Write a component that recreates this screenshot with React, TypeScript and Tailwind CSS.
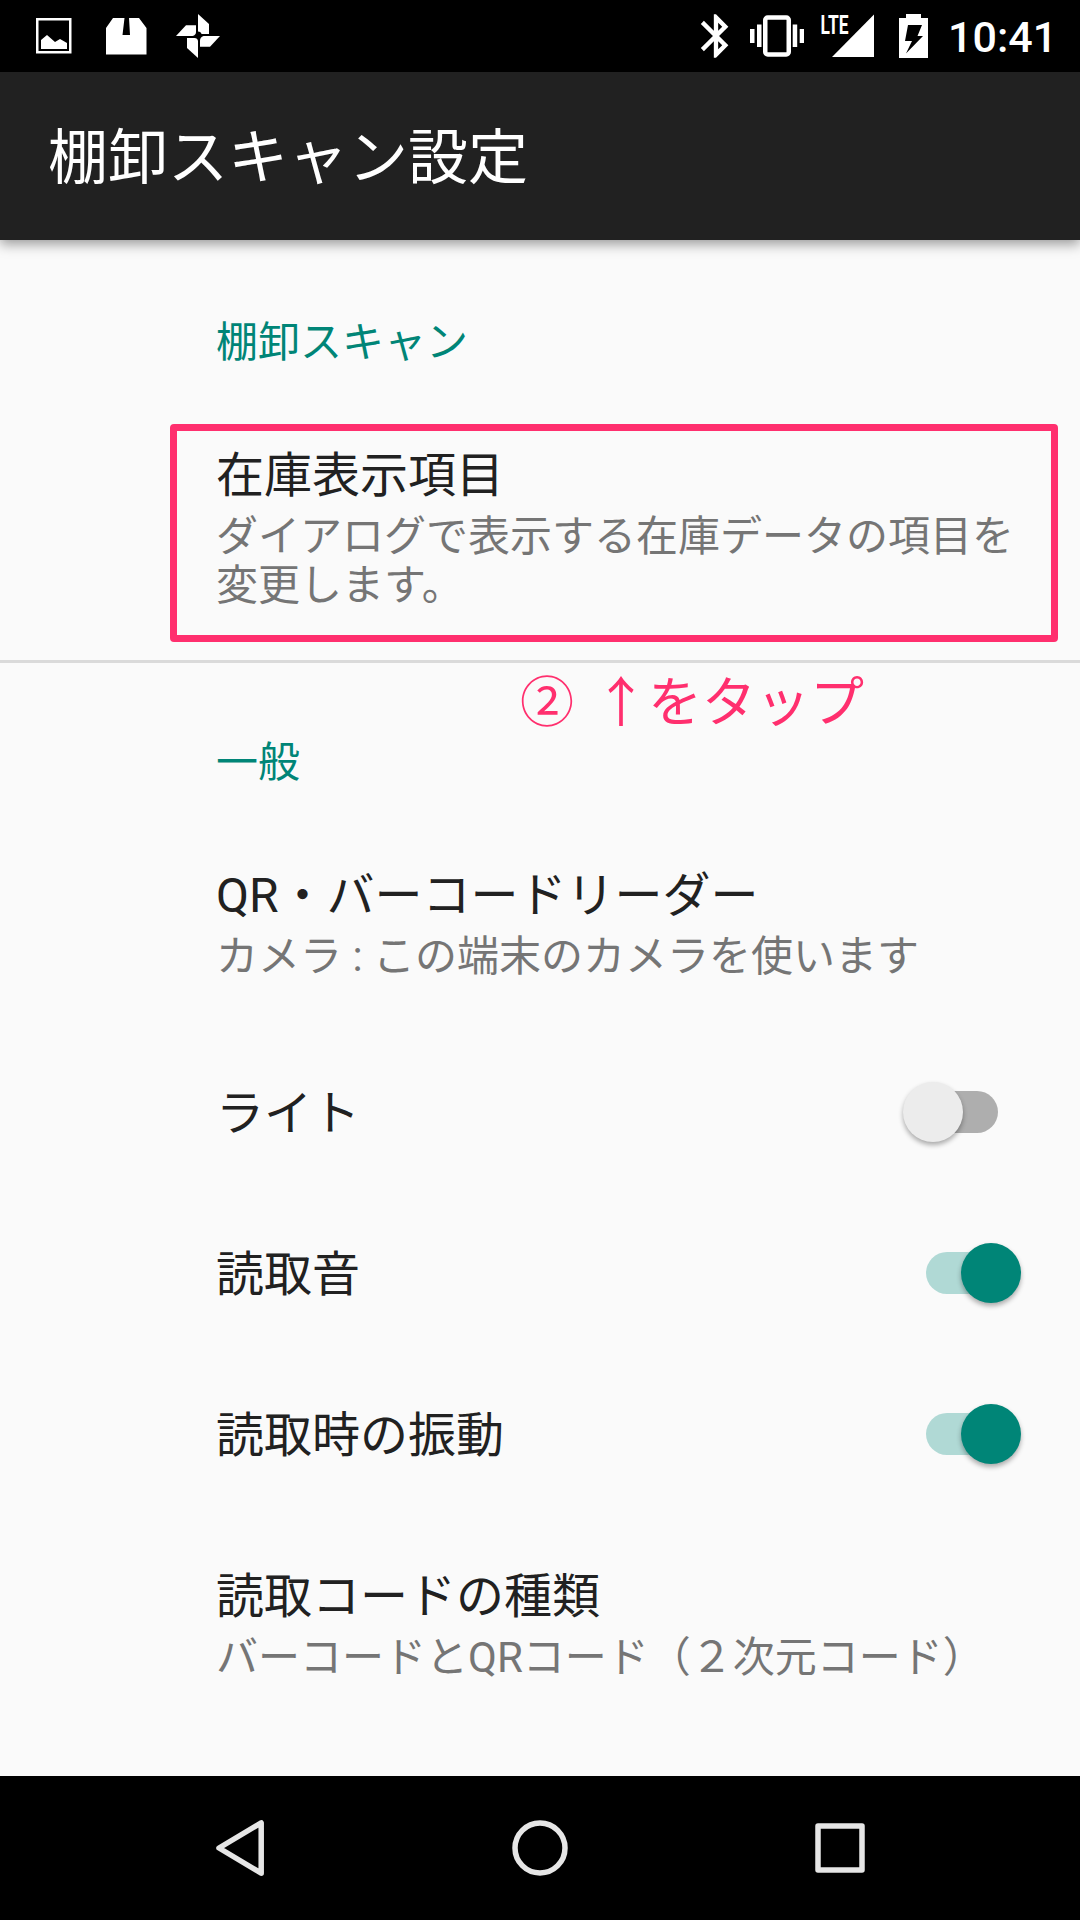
import { useState } from 'react';

type PreferenceProps = {
	title: string;
	summary?: string;
	className?: string;
};

type SwitchRowProps = {
	title: string;
	initial: boolean;
};

function StatusBar() {
	return (
		<div className="flex h-[72px] items-center justify-between bg-black text-white">
			<div className="flex pl-9">
				<svg width="36" height="72" viewBox="36 0 36 72" fill="currentColor">
					<rect x="37.25" y="19.25" width="33" height="33" fill="none" stroke="currentColor" strokeWidth="2.5" />
					<path d="M41 49V40L47 35L55 42L60 39L67 43V49Z" />
				</svg>
				<svg width="41" height="72" viewBox="106 0 41 72" className="ml-[34px]" fill="currentColor">
					<path d="M106 54.5V28L113 18H124.5L122.5 35H130L129 18H139L146.5 28V54.5Z" />
				</svg>
				<svg width="44" height="72" viewBox="176 0 44 72" className="ml-[29px]" fill="currentColor">
					<path d="M198 14L209 24V34H201.500Q201 31.500 198 31.500Z" />
					<path d="M176 36L186 25.300H196V32Q196 35 192.500 36Z" />
					<path d="M220 36L210 46.700H200V40.500Q200 37 203.500 36Z" />
					<path d="M198 58L187 48V38H194.500Q197.500 38 198 41Z" />
				</svg>
			</div>

			<div className="flex items-center pr-6">
				<svg width="52" height="52" viewBox="0 0 24 24" className="mr-[8px]" fill="currentColor">
					<path d="M17.71 7.71L12 2h-1v7.59L6.41 5 5 6.41 10.59 12 5 17.59 6.41 19 11 14.41V22h1l5.71-5.71-4.3-4.29 4.3-4.29zM13 5.83l1.88 1.88L13 9.59V5.83zm1.88 10.46L13 18.17v-3.76l1.88 1.88z" />
				</svg>
				<svg width="54" height="72" viewBox="750 0 54 72" fill="currentColor">
					<rect x="750" y="29" width="4.500" height="14" />
					<rect x="757" y="24.500" width="4.500" height="22.500" />
					<rect x="765.250" y="17.500" width="23.500" height="37" rx="2.500" fill="none" stroke="currentColor" strokeWidth="4.500" />
					<rect x="792.700" y="24.500" width="4.500" height="22.500" />
					<rect x="799.700" y="29" width="4.300" height="14" />
				</svg>
				<svg width="54" height="72" viewBox="820 0 54 72" className="ml-4" fill="currentColor">
					<text
						x="820.5"
						y="33.500"
						fontSize="25"
						fontWeight="700"
						textLength="28"
						lengthAdjust="spacingAndGlyphs"
						fontFamily="Roboto, sans-serif"
					>
						LTE
					</text>
					<path d="M832 57L874 14.500V57Z" />
				</svg>
				<svg width="29" height="72" viewBox="899 0 29 72" className="ml-[25px]">
					<path d="M899 18H906V14H921V18H928V58H899Z" fill="currentColor" />
					<path d="M908 25H922L917.500 36H923L906 53.500L912 41H905Z" fill="#000" />
				</svg>
				<span className="ml-[20px] w-[108px] pt-[3px] text-[43px] leading-[69px] font-medium whitespace-nowrap">
					10:41
				</span>
			</div>
		</div>
	);
}

function SectionHeader({ title, className }: PreferenceProps) {
	return <h2 className={`pl-54 text-[42px] leading-[49px] text-[#008577] ${className}`}>{title}</h2>;
}

function Preference({ title, summary, className }: PreferenceProps) {
	return (
		<div className={`pr-12 pl-54 ${className}`}>
			<div className="text-[48px] leading-[56px] text-[#212121]">{title}</div>
			<div className="mt-2 mb-px text-[42px] leading-[49px] text-[#757575]">{summary}</div>
		</div>
	);
}

function SwitchRow({ title, initial }: SwitchRowProps) {
	const [on, setOn] = useState(initial);

	return (
		<div className="flex h-[161px] items-center justify-between pr-[82px] pl-54">
			<span className="pt-1 text-[48px] leading-[56px] text-[#212121]">{title}</span>
			<button
				type="button"
				role="switch"
				aria-checked={on}
				aria-label={title}
				onClick={() => setOn(!on)}
				className={`flex h-[42px] w-[72px] items-center rounded-full ${
					on ? 'justify-end bg-[#b0d9d5]' : 'justify-start bg-[#aeaeae]'
				}`}
			>
				<span
					className={`size-[60px] shrink-0 rounded-full shadow-[0_3px_5px_rgba(0,0,0,0.32)] ${
						on ? '-mr-[23px] bg-[#008577]' : '-ml-[23px] bg-[#ececec]'
					}`}
				/>
			</button>
		</div>
	);
}

function NavigationBar() {
	return (
		<div className="flex h-36 items-center px-[90px] text-[#e6e6e6]">
			<div className="flex flex-1 justify-center">
				<svg width="60" height="60" viewBox="0 0 60 60" fill="none" stroke="currentColor" strokeWidth="5.5" strokeLinejoin="round">
					<path d="M51.200 4.800V55.200L9 30Z" />
				</svg>
			</div>
			<div className="flex flex-1 justify-center">
				<svg width="60" height="60" viewBox="0 0 60 60" fill="none" stroke="currentColor" strokeWidth="5.5">
					<circle cx="30" cy="30" r="25" />
				</svg>
			</div>
			<div className="flex flex-1 justify-center">
				<svg width="60" height="60" viewBox="0 0 60 60" fill="none" stroke="currentColor" strokeWidth="5.5" strokeLinejoin="round">
					<rect x="8" y="8" width="44" height="44" />
				</svg>
			</div>
		</div>
	);
}

export default function App() {
	return (
		<div
			lang="ja"
			className="relative flex h-[1920px] w-[1080px] flex-col overflow-hidden bg-black font-[Roboto,'Noto_Sans_CJK_JP',sans-serif]"
		>
			<StatusBar />

			<header className="relative flex h-[168px] items-center bg-[#212121] pt-1.5 pl-12 shadow-[0_4px_12px_rgba(0,0,0,0.4)]">
				<h1 className="text-[60px] leading-[70px] text-white">棚卸スキャン設定</h1>
			</header>

			<main className="flex-1 bg-[#fafafa]">
				<SectionHeader title="棚卸スキャン" className="pt-[78px]" />
				<Preference
					title="在庫表示項目"
					summary="ダイアログで表示する在庫データの項目を変更します。"
					className="pt-[81px] pb-[49px]"
				/>
				<hr className="h-[3px] border-0 bg-[#dadada]" />
				<SectionHeader title="一般" className="pt-[75px]" />
				<Preference
					title="QR・バーコードリーダー"
					summary="カメラ : この端末のカメラを使います"
					className="pt-[81px] pb-[49px]"
				/>
				<SwitchRow title="ライト" initial={false} />
				<SwitchRow title="読取音" initial={true} />
				<SwitchRow title="読取時の振動" initial={true} />
				<Preference
					title="読取コードの種類"
					summary="バーコードとQRコード（２次元コード）"
					className="pt-[55px]"
				/>
			</main>

			<NavigationBar />

			{/* Tutorial callout */}
			<div className="absolute top-[424px] left-[170px] h-[218px] w-[888px] rounded-[4px] border-7 border-[#ff2f6e]" />
			<div className="absolute top-[660px] left-[520px] flex gap-5 font-['Noto_Sans_CJK_JP',sans-serif] text-[54px] leading-[78px] whitespace-nowrap text-[#ff2f6e]">
				<span>②</span>
				<span>↑をタップ</span>
			</div>
		</div>
	);
}
